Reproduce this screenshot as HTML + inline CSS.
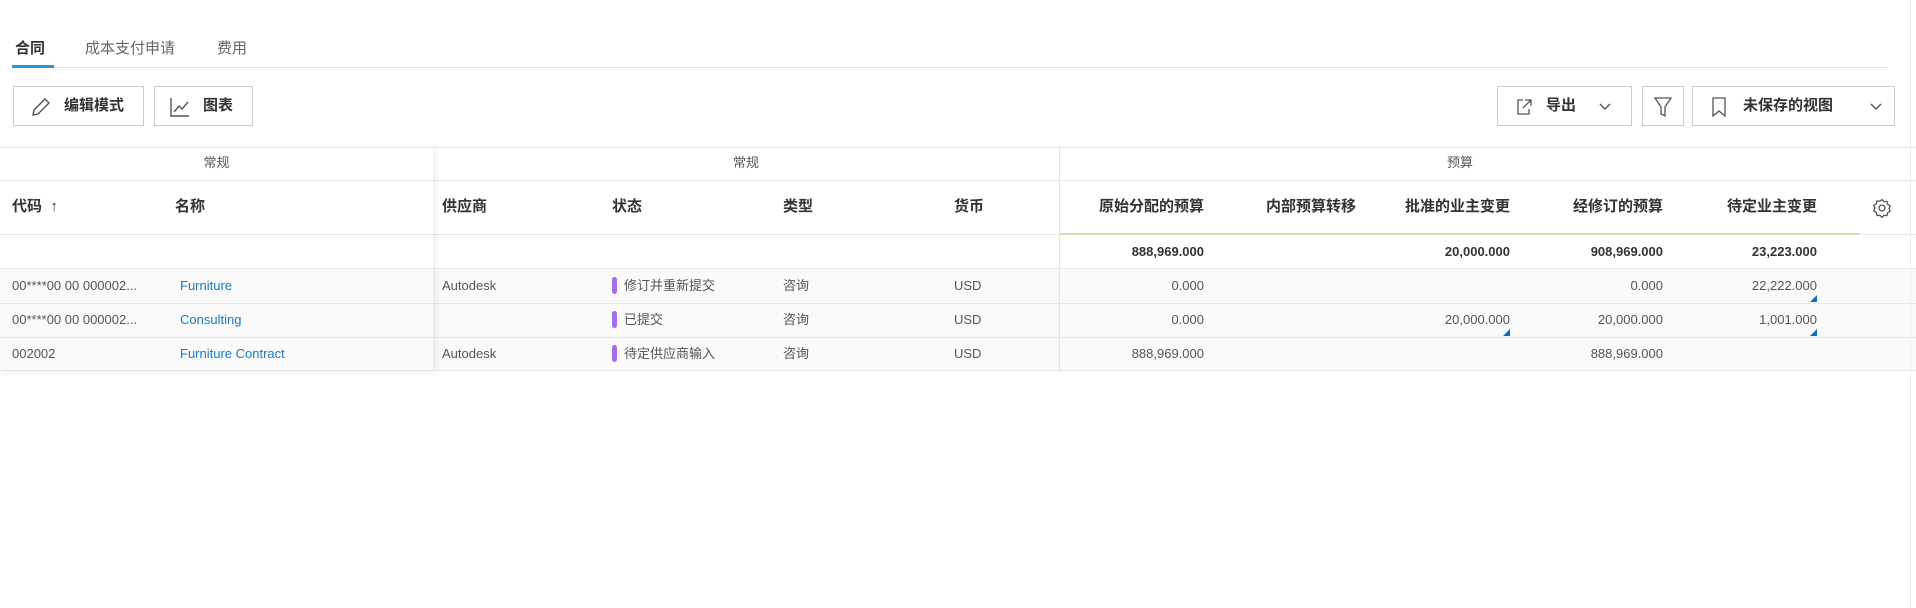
<!DOCTYPE html>
<html><head><meta charset="utf-8"><style>
*{box-sizing:border-box;margin:0;padding:0}
body{width:1916px;height:608px;background:#fff;font-family:"Liberation Sans","Noto Sans CJK SC",sans-serif;color:#3c3c3c;position:relative;overflow:hidden}
.a{position:absolute;white-space:nowrap;line-height:18px}
.btn{position:absolute;border:1px solid #ccc;background:#fff;height:40px;top:86px;font-size:15px;font-weight:bold;color:#333}
.hl{position:absolute;height:1px;background:#e8e8e8}
.h{font-size:15px;font-weight:bold;color:#333;top:198px}
.d{font-size:13px;color:#555}
.r{text-align:right}
.lnk{color:#1a7ac0}
.bar{position:absolute;width:5px;height:17px;border-radius:3px;background:#a66cf0}
.tri{position:absolute;width:0;height:0;border-left:7px solid transparent;border-bottom:7px solid #0b6cc0}
</style></head><body>
<div class="a" style="left:15px;top:40px;font-size:15px;font-weight:bold;color:#333">合同</div>
<div class="a" style="left:85px;top:40px;font-size:15px;color:#666">成本支付申请</div>
<div class="a" style="left:217px;top:40px;font-size:15px;color:#666">费用</div>
<div class="hl" style="left:12px;top:67px;width:1876px;background:#dde3e8"></div>
<div class="a" style="left:12px;top:65px;width:42px;height:3px;background:#1f9ad6"></div>

<div class="btn" style="left:13px;width:131px"><svg class="a" style="left:16px;top:9px" width="22" height="22" viewBox="0 0 22 22" fill="none" stroke="#555" stroke-width="1.4"><path d="M15 3l4 4L8 18l-5 1 1-5z"/></svg><span class="a" style="left:50px;top:10px">编辑模式</span></div>
<div class="btn" style="left:154px;width:99px"><svg class="a" style="left:14px;top:9px" width="22" height="22" viewBox="0 0 22 22" fill="none" stroke="#555" stroke-width="1.4"><path d="M2 2v18h18M5 16l5-6 3 3 6-7"/></svg><span class="a" style="left:48px;top:10px">图表</span></div>

<div class="btn" style="left:1497px;width:135px"><svg class="a" style="left:16px;top:10px" width="20" height="20" viewBox="0 0 20 20" fill="none" stroke="#555" stroke-width="1.3"><path d="M9 3H4v14h11v-5M11 3h6v6M17 3l-8 8"/></svg><span class="a" style="left:48px;top:10px">导出</span><svg class="a" style="left:100px;top:15px" width="14" height="10" viewBox="0 0 14 10" fill="none" stroke="#555" stroke-width="1.4"><path d="M2 2l5 5 5-5"/></svg></div>
<div class="btn" style="left:1642px;width:42px"><svg class="a" style="left:10px;top:9px" width="20" height="22" viewBox="0 0 20 22" fill="none" stroke="#555" stroke-width="1.3"><path d="M2 2h16l-6 9v9l-4-2v-7z"/></svg></div>
<div class="btn" style="left:1692px;width:203px"><svg class="a" style="left:18px;top:9px" width="16" height="22" viewBox="0 0 16 22" fill="none" stroke="#555" stroke-width="1.3"><path d="M2 2h12v18l-6-5-6 5z"/></svg><span class="a" style="left:50px;top:10px">未保存的视图</span><svg class="a" style="left:176px;top:15px" width="14" height="10" viewBox="0 0 14 10" fill="none" stroke="#555" stroke-width="1.4"><path d="M2 2l5 5 5-5"/></svg></div>

<div class="hl" style="left:0;top:147px;width:1916px"></div>
<div class="hl" style="left:0;top:180px;width:1916px"></div>
<div class="hl" style="left:0;top:234px;width:1060px"></div>
<div class="hl" style="left:1860px;top:234px;width:56px"></div>
<div class="a" style="left:1060px;top:233px;width:800px;height:2px;background:#c9e3b3"></div>
<div class="a" style="left:0;top:269px;width:1916px;height:101px;background:#fafafa"></div>
<div class="hl" style="left:0;top:268px;width:1916px"></div>
<div class="hl" style="left:0;top:303px;width:1916px"></div>
<div class="hl" style="left:0;top:337px;width:1916px"></div>
<div class="hl" style="left:0;top:370px;width:1916px"></div>
<div class="a" style="left:1059px;top:147px;width:1px;height:223px;background:#e4e4e4"></div>
<div class="a" style="left:1910px;top:0;width:1px;height:608px;background:#eee"></div>
<div class="a" style="left:0;top:147px;width:433px;height:223px;box-shadow:3px 2px 6px rgba(0,0,0,0.07)"></div>

<div class="a" style="left:0;top:154px;width:433px;text-align:center;font-size:13px;color:#555">常规</div>
<div class="a" style="left:433px;top:154px;width:626px;text-align:center;font-size:13px;color:#555">常规</div>
<div class="a" style="left:1060px;top:154px;width:800px;text-align:center;font-size:13px;color:#555">预算</div>

<div class="a h" style="left:12px">代码 &nbsp;↑</div>
<div class="a h" style="left:175px">名称</div>
<div class="a h" style="left:442px">供应商</div>
<div class="a h" style="left:612px">状态</div>
<div class="a h" style="left:783px">类型</div>
<div class="a h" style="left:954px">货币</div>
<div class="a h r" style="right:712px">原始分配的预算</div>
<div class="a h r" style="right:560px">内部预算转移</div>
<div class="a h r" style="right:406px">批准的业主变更</div>
<div class="a h r" style="right:253px">经修订的预算</div>
<div class="a h r" style="right:99px">待定业主变更</div>
<svg class="a" style="left:1872px;top:198px" width="20" height="20" viewBox="0 0 20 20" fill="none" stroke="#555" stroke-width="1.3"><path d="M10 1.5l2 2.2 3-.3.6 2.9 2.6 1.5-1.2 2.7 1.2 2.7-2.6 1.5-.6 2.9-3-.3-2 2.2-2-2.2-3 .3-.6-2.9-2.6-1.5L3 10 1.8 7.3l2.6-1.5.6-2.9 3 .3z"/><circle cx="10" cy="10" r="3"/></svg>

<div class="a d r" style="right:712px;top:243px;font-weight:bold;color:#333">888,969.000</div>
<div class="a d r" style="right:406px;top:243px;font-weight:bold;color:#333">20,000.000</div>
<div class="a d r" style="right:253px;top:243px;font-weight:bold;color:#333">908,969.000</div>
<div class="a d r" style="right:99px;top:243px;font-weight:bold;color:#333">23,223.000</div>

<div class="a d" style="left:12px;top:277px">00****00 00 000002...</div>
<div class="a d lnk" style="left:180px;top:277px">Furniture</div>
<div class="a d" style="left:442px;top:277px">Autodesk</div>
<div class="bar" style="left:612px;top:277px"></div><div class="a d" style="left:624px;top:277px">修订并重新提交</div>
<div class="a d" style="left:783px;top:277px">咨询</div>
<div class="a d" style="left:954px;top:277px">USD</div>
<div class="a d r" style="right:712px;top:277px">0.000</div>
<div class="a d r" style="right:253px;top:277px">0.000</div>
<div class="a d r" style="right:99px;top:277px">22,222.000</div>
<div class="tri" style="left:1810px;top:295px"></div>

<div class="a d" style="left:12px;top:311px">00****00 00 000002...</div>
<div class="a d lnk" style="left:180px;top:311px">Consulting</div>
<div class="bar" style="left:612px;top:311px"></div><div class="a d" style="left:624px;top:311px">已提交</div>
<div class="a d" style="left:783px;top:311px">咨询</div>
<div class="a d" style="left:954px;top:311px">USD</div>
<div class="a d r" style="right:712px;top:311px">0.000</div>
<div class="a d r" style="right:406px;top:311px">20,000.000</div>
<div class="a d r" style="right:253px;top:311px">20,000.000</div>
<div class="a d r" style="right:99px;top:311px">1,001.000</div>
<div class="tri" style="left:1503px;top:329px"></div>
<div class="tri" style="left:1810px;top:329px"></div>

<div class="a d" style="left:12px;top:345px">002002</div>
<div class="a d lnk" style="left:180px;top:345px">Furniture Contract</div>
<div class="a d" style="left:442px;top:345px">Autodesk</div>
<div class="bar" style="left:612px;top:345px"></div><div class="a d" style="left:624px;top:345px">待定供应商输入</div>
<div class="a d" style="left:783px;top:345px">咨询</div>
<div class="a d" style="left:954px;top:345px">USD</div>
<div class="a d r" style="right:712px;top:345px">888,969.000</div>
<div class="a d r" style="right:253px;top:345px">888,969.000</div>
</body></html>
